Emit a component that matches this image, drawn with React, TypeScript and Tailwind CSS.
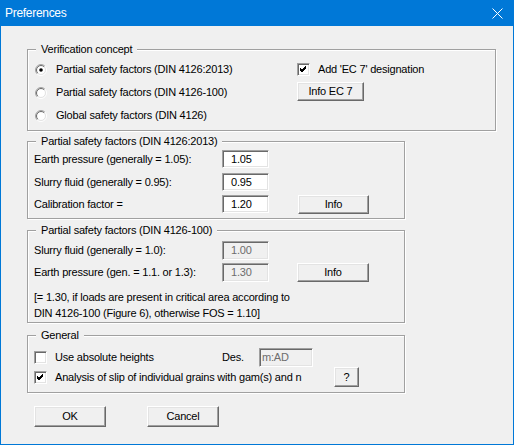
import React from "react";

const edit =
  "flex items-center border border-t-[#a0a0a0] border-l-[#a0a0a0] border-b-white border-r-white shadow-[inset_1px_1px_0_#696969,inset_-1px_-1px_0_#e3e3e3]";

function Edit({
  value,
  disabled,
  w = "w-[47px]",
  h = "h-[18px]",
  pl = "pl-[8px]",
}: {
  value: string;
  disabled?: boolean;
  w?: string;
  h?: string;
  pl?: string;
}) {
  return (
    <div className={`${edit} ${w} ${h} ${pl} ${disabled ? "bg-[#f0f0f0] text-[#6d6d6d]" : "bg-white text-black"}`}>
      {value}
    </div>
  );
}

function Btn({ label, className }: { label: string; className: string }) {
  return (
    <div
      className={`flex items-center justify-center bg-[#f0f0f0] border border-t-white border-l-white border-b-[#696969] border-r-[#696969] shadow-[inset_-1px_-1px_0_#a0a0a0,inset_1px_1px_0_#e3e3e3] ${className}`}
    >
      {label}
    </div>
  );
}

function Check({ checked }: { checked?: boolean }) {
  return (
    <div className="w-[13px] h-[13px] shrink-0 bg-white border border-t-[#a0a0a0] border-l-[#a0a0a0] border-b-white border-r-white shadow-[inset_1px_1px_0_#696969,inset_-1px_-1px_0_#e3e3e3] flex items-center justify-center">
      {checked && (
        <svg width="9" height="9" viewBox="0 0 9 9">
          <path d="M1 4 L3 6 L7 2 M1 5 L3 7 L7 3 M1 3 L3 5 L7 1" stroke="#000" strokeWidth="1" fill="none" />
        </svg>
      )}
    </div>
  );
}

function Radio({ checked }: { checked?: boolean }) {
  const arc = (r: number) => {
    const d = r * 0.7071;
    return {
      tl: `M ${6 - d} ${6 + d} A ${r} ${r} 0 0 1 ${6 + d} ${6 - d}`,
      br: `M ${6 + d} ${6 - d} A ${r} ${r} 0 0 1 ${6 - d} ${6 + d}`,
    };
  };
  const o = arc(5.5);
  const i = arc(4.5);
  return (
    <svg width="12" height="12" viewBox="0 0 12 12" className="shrink-0">
      <circle cx="6" cy="6" r="4.5" fill="#fff" />
      <path d={o.tl} stroke="#a0a0a0" fill="none" />
      <path d={o.br} stroke="#fff" fill="none" />
      <path d={i.tl} stroke="#696969" fill="none" />
      <path d={i.br} stroke="#e3e3e3" fill="none" />
      {checked && <circle cx="6" cy="6" r="1.8" fill="#000" />}
    </svg>
  );
}

function Group({ title, className, children }: { title: string; className: string; children: React.ReactNode }) {
  return (
    <div
      className={`relative border border-[#a0a0a0] shadow-[inset_1px_1px_0_#fff,1px_1px_0_#fff] ${className}`}
    >
      <span className="absolute left-[8px] top-[-8px] px-[5px] bg-[#f0f0f0] leading-[14px]">{title}</span>
      {children}
    </div>
  );
}

export default function App() {
  return (
    <div className="w-[514px] h-[445px] bg-[#0078d7] px-px pb-px flex flex-col font-['Liberation_Sans',Arial,sans-serif] text-[11px] tracking-[-0.2px] text-black">
      {/* Title bar */}
      <div className="h-[26px] flex items-center justify-between pl-[4px] pr-[10px] text-white text-[12px] tracking-[-0.3px]">
        <span>Preferences</span>
        <svg width="11" height="11" viewBox="0 0 11 11">
          <path d="M0.5 0.5 L10.5 10.5 M10.5 0.5 L0.5 10.5" stroke="#fff" strokeWidth="1" />
        </svg>
      </div>

      <div className="flex-1 bg-[#f0f0f0] pl-[26px] pt-[23px]">
        {/* Verification concept */}
        <Group title="Verification concept" className="w-[469px] h-[82px]">
          <div className="flex pl-[7px] pt-[8px]">
            <div className="w-[262px] flex flex-col">
              {[
                ["Partial safety factors (DIN 4126:2013)", true],
                ["Partial safety factors (DIN 4126-100)", false],
                ["Global safety factors (DIN 4126)", false],
              ].map(([t, c]) => (
                <div key={t as string} className="h-[23px] flex items-center">
                  <Radio checked={c as boolean} />
                  <span className="ml-[9px]">{t}</span>
                </div>
              ))}
            </div>
            <div className="flex flex-col">
              <div className="h-[23px] flex items-center">
                <Check checked />
                <span className="ml-[8px]">Add 'EC 7' designation</span>
              </div>
              <Btn label="Info EC 7" className="mt-px w-[67px] h-[19px]" />
            </div>
          </div>
        </Group>

        {/* Partial safety factors DIN 4126:2013 */}
        <Group title="Partial safety factors (DIN 4126:2013)" className="mt-[10px] w-[378px] h-[78px]">
          <div className="flex flex-col pl-[6px] pt-[8px]">
            <div className="flex items-center h-[18px]">
              <span className="w-[188px]">Earth pressure (generally = 1.05):</span>
              <Edit value="1.05" />
            </div>
            <div className="flex items-center h-[18px] mt-[5px]">
              <span className="w-[188px]">Slurry fluid (generally = 0.95):</span>
              <Edit value="0.95" />
            </div>
            <div className="flex items-center h-[18px] mt-[4px]">
              <span className="w-[188px]">Calibration factor =</span>
              <Edit value="1.20" />
              <Btn label="Info" className="ml-[29px] w-[71px] h-[19px]" />
            </div>
          </div>
        </Group>

        {/* Partial safety factors DIN 4126-100 */}
        <Group title="Partial safety factors (DIN 4126-100)" className="mt-[11px] w-[378px] h-[93px]">
          <div className="flex flex-col pl-[6px] pt-[10px]">
            <div className="flex items-center h-[19px]">
              <span className="w-[188px]">Slurry fluid (generally = 1.0):</span>
              <Edit value="1.00" disabled h="h-[19px]" />
            </div>
            <div className="flex items-center h-[19px] mt-[3px]">
              <span className="w-[188px]">Earth pressure (gen. = 1.1. or 1.3):</span>
              <Edit value="1.30" disabled h="h-[19px]" />
              <Btn label="Info" className="ml-[28px] w-[72px] h-[19px]" />
            </div>
            <div className="mt-[7px] leading-[16px]">
              <div>[= 1.30, if loads are present in critical area according to</div>
              <div>DIN 4126-100 (Figure 6), otherwise FOS = 1.10]</div>
            </div>
          </div>
        </Group>

        {/* General */}
        <Group title="General" className="mt-[12px] w-[378px] h-[58px]">
          <div className="flex flex-col pl-[6px] pt-[12px]">
            <div className="flex items-center h-[19px]">
              <div className="w-[188px] flex items-center">
                <Check />
                <span className="ml-[8px]">Use absolute heights</span>
              </div>
              <span className="w-[37px]">Des.</span>
              <Edit value="m:AD" disabled w="w-[54px]" h="h-[19px]" pl="pl-[2px]" />
            </div>
            <div className="flex items-center h-[20px]">
              <div className="w-[300px] flex items-center">
                <Check checked />
                <span className="ml-[8px]">Analysis of slip of individual grains with gam(s) and n</span>
              </div>
              <Btn label="?" className="w-[25px] h-[20px]" />
            </div>
          </div>
        </Group>

        {/* Buttons */}
        <div className="flex mt-[13px] pl-[7px]">
          <Btn label="OK" className="w-[72px] h-[21px]" />
          <Btn label="Cancel" className="ml-[41px] w-[72px] h-[21px]" />
        </div>
      </div>
    </div>
  );
}
